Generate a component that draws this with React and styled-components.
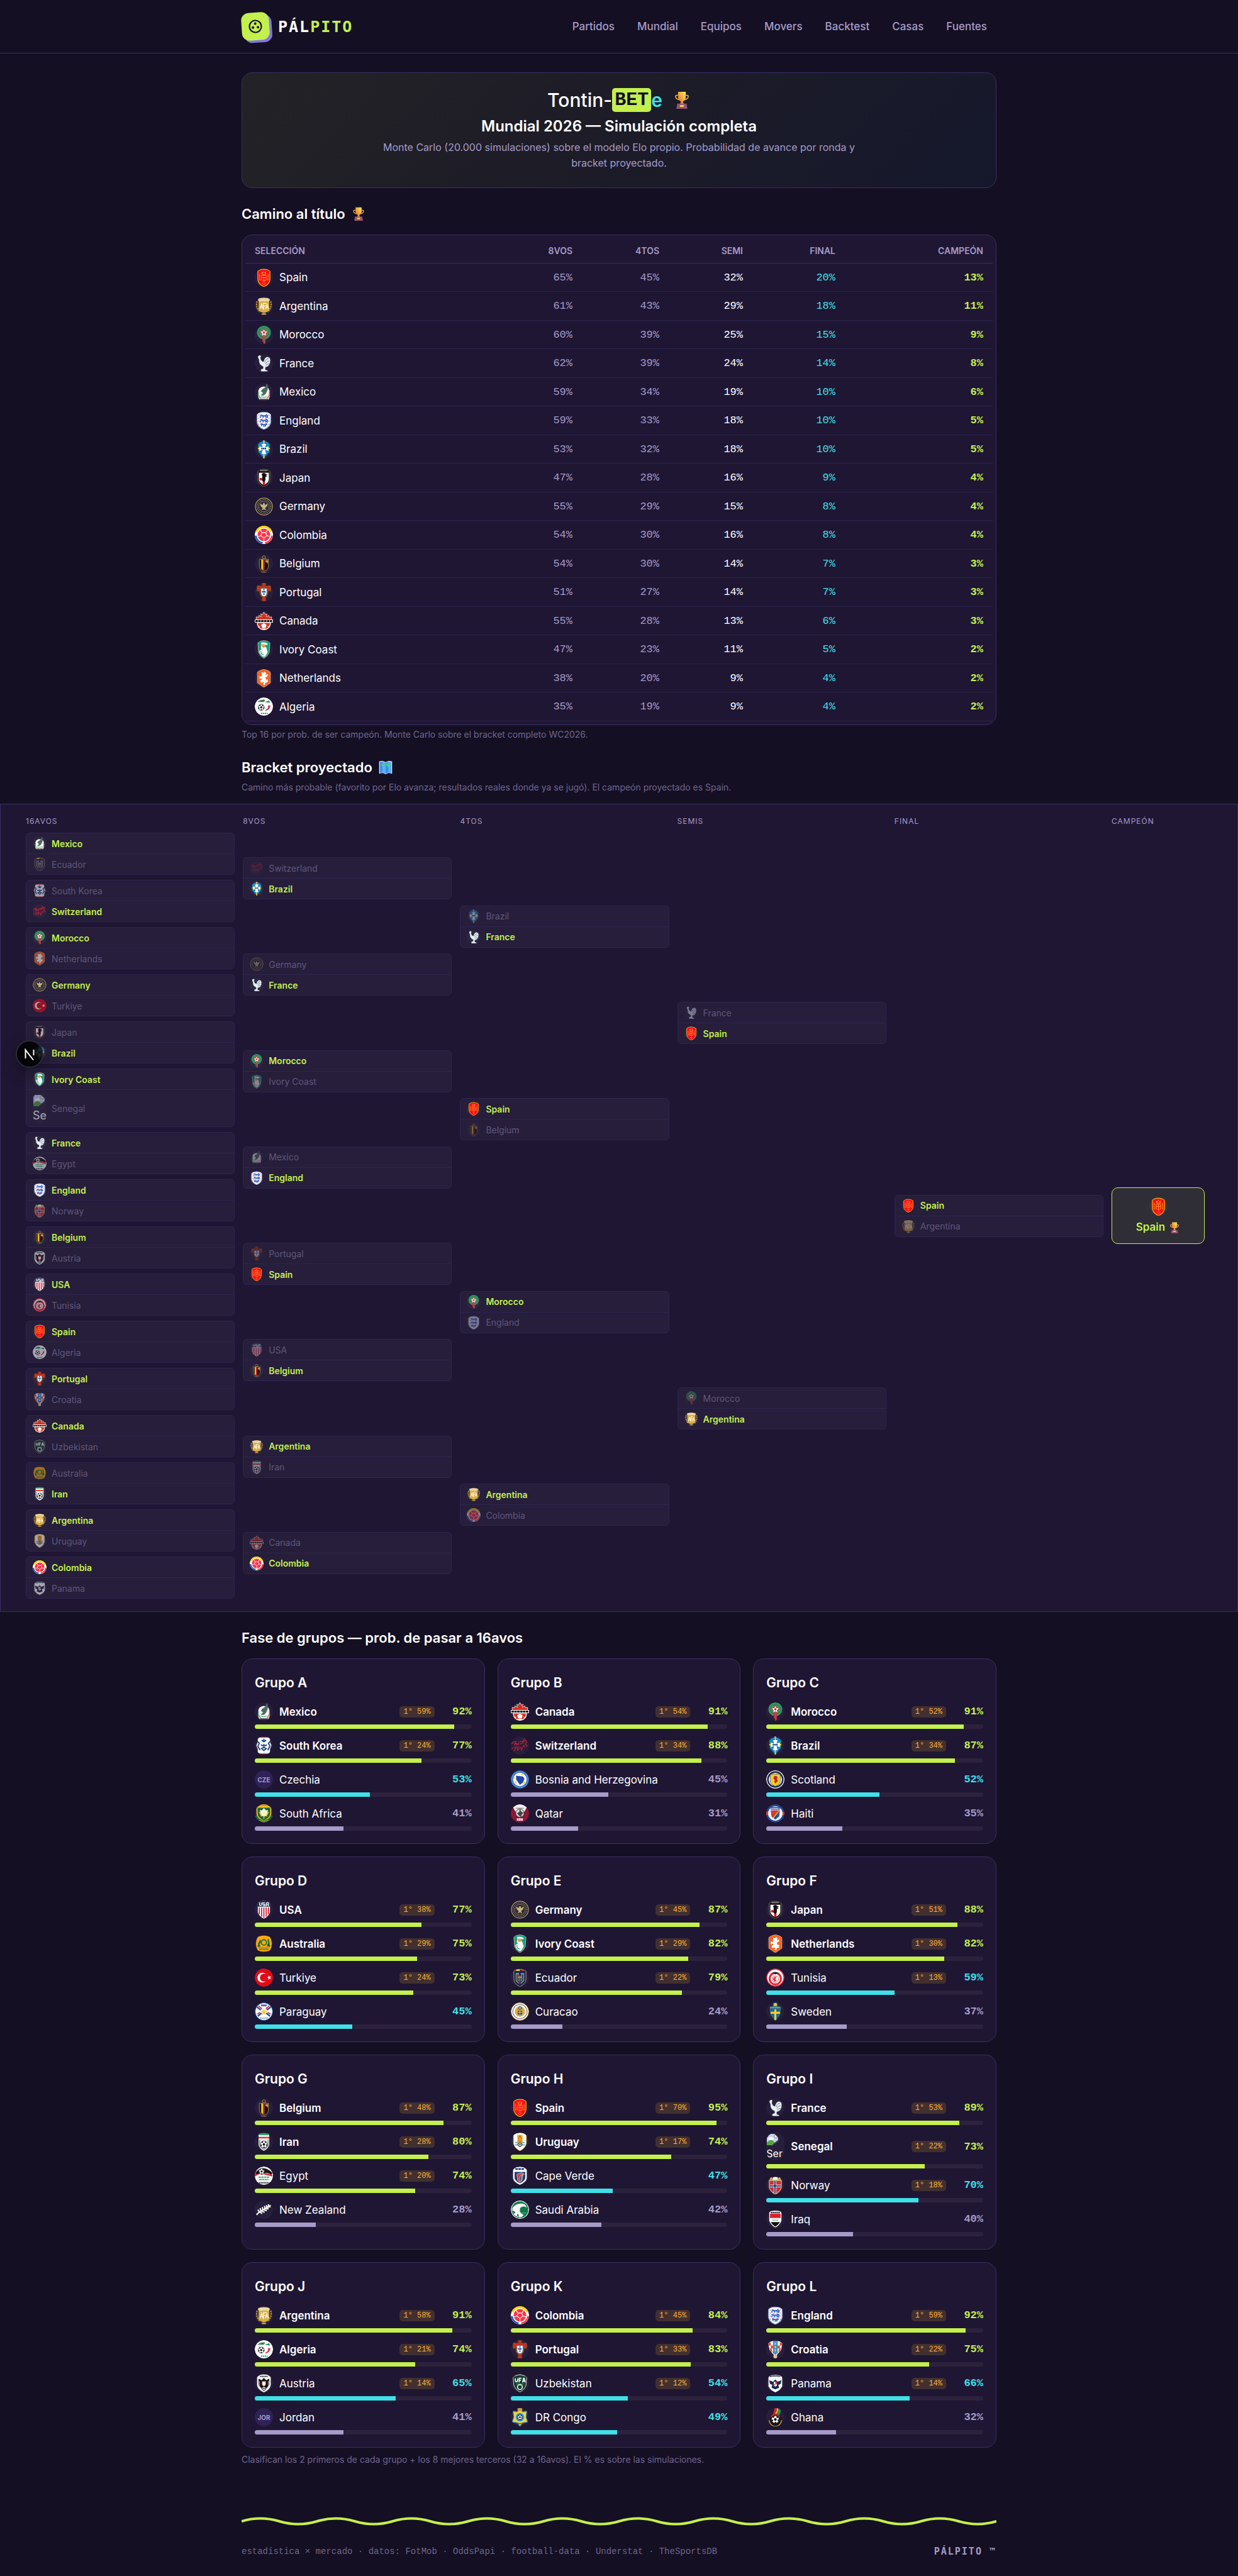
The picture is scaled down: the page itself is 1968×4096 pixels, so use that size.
import React from "react";
import styled, { createGlobalStyle, css } from "styled-components";

const colors = {
  bg: "#140f22",
  panel: "#1f1633",
  line: "#3a2e66",
  lineSoft: "#2e2450",
  text: "#ffffff",
  muted: "#a69bc8",
  faint: "#6f6690",
  lime: "#c4f04d",
  cyan: "#40e0e8",
  amber: "#ffb03a",
};

const sans = `Inter, "Liberation Sans", sans-serif`;
const mono = `"Liberation Mono", monospace`;
const pixel = `"DejaVu Sans Mono", monospace`;

const GlobalStyle = createGlobalStyle`
  * { box-sizing: border-box; }
  body {
    margin: 0;
    background: ${colors.bg};
    color: ${colors.text};
    font-family: ${sans};
    font-size: 17px;
  }
  h1, h2, h3, p { margin: 0; }
`;

/* ---------- crests ---------- */

const SHIELD = "M4 3Q12 -1 20 3V14Q20 20 12 24Q4 20 4 14Z";
const Ball = ({ x = 12, y = 12, r = 4 }) => (
  <g>
    <circle cx={x} cy={y} r={r} fill="#fff" stroke="#111" strokeWidth=".6" />
    <circle cx={x} cy={y} r={r * 0.35} fill="#111" />
    <circle cx={x} cy={y} r={r * 0.8} fill="none" stroke="#111" strokeWidth={r * 0.35} strokeDasharray={`${r * 0.4} ${r * 0.6}`} />
  </g>
);

const crests = {
  Spain: (
    <g>
      <path d={SHIELD} fill="#ff0a1e" stroke="#f5b400" strokeWidth="1" />
      <path d="M9.500 4.500l1 1.500 1.500-2 1.500 2 1-1.500v3h-5zM6.500 7v8M17.500 7v8M5.800 15h1.600M16.600 15h1.600M9 9h6v6q-3 2.500-6 0zM12 9v7M9 12h6" fill="none" stroke="#ff9d1e" strokeWidth=".8" />
      <circle cx="12" cy="19.500" r="1.400" fill="none" stroke="#ff9d1e" strokeWidth=".6" />
    </g>
  ),
  Argentina: (
    <g>
      <path d="M3 6q-2 8 4 14M21 6q2 8-4 14" fill="none" stroke="#c9a13b" strokeWidth="1.800" strokeDasharray="2 1" />
      <path d="M5 5h14v11q0 4-7 5-7-1-7-5z" fill="#d9ae45" />
      <path d="M4 3q8-4 16 0v2H4z" fill="#d9ae45" />
      <path d="M5 2.800h14M5 4.800h14" stroke="#fff" strokeWidth="1" />
      <path d="M7 16l2-7 2 7M8 13.500h2.500M11.500 17V8.500h4M11.500 12h3M14 16l2-6 2 6M15 14h2" fill="none" stroke="#fff" strokeWidth="1" />
      <path d="M9 22l3-1 3 1v1.500H9z" fill="#c9a13b" />
    </g>
  ),
  Morocco: (
    <g>
      <circle cx="12" cy="9" r="9" fill="#2f9c63" />
      <circle cx="12" cy="9" r="6.500" fill="none" stroke="#1b6b44" strokeDasharray="1 1" />
      <path d="M12 3.500l1.600 3.600 4 .4-3 2.700.9 3.900-3.500-2-3.500 2 .9-3.900-3-2.700 4-.4z" fill="#fff" stroke="#d9273a" strokeWidth=".9" />
      <circle cx="12" cy="9" r="1.500" fill="#d9273a" />
      <path d="M10 14h2v7h-2zM12.500 14h1.700v9h-1.700z" fill="#d9273a" />
      <path d="M11.700 14h1v10h-1z" fill="#2f9c63" />
    </g>
  ),
  France: (
    <g>
      <path
        d="M5 1l2 .5 1.500 1.500-1 1.500q.5 5 4 5.500 1-5.500 5-6.500 4.500.5 4 5.500-.5 6-4 7.500l-2.500 1v3l3 1v1.500H8V20l3-1v-2.500Q5 14 5.500 7.500L4 4z"
        fill="#e8eef2"
        stroke="#1d2f46"
        strokeWidth=".4"
      />
      <path d="M13 11q1.500-5 5-5M14 13q2-4 5-4M14.500 15q2-2.500 4.500-2" fill="none" stroke="#5b6f86" strokeWidth=".8" />
    </g>
  ),
  Mexico: (
    <g>
      <path d="M6 7q6-5 12 0 4 7 0 15H6q-4-8 0-15z" fill="#f2f4f2" />
      <path d="M16 0q3 7-1 13-3 5-7 3l3-3-3-2 2-3q4-1 6-8z" fill="#4f6b62" />
      <path d="M5 11q-1.500 6 3 9" fill="none" stroke="#1f9a55" strokeWidth="1" />
      <path d="M19 11q1.500 6-3 9" fill="none" stroke="#d8324a" strokeWidth="1" />
      <path d="M8 18q4 2 8 0" fill="none" stroke="#1f9a55" strokeWidth=".8" />
      <path d="M6.500 21.500h11" stroke="#333" strokeWidth="1.500" strokeDasharray="1.200 .5" />
    </g>
  ),
  England: (
    <g>
      <path d="M3 3Q12 -1 21 3V14Q21 20 12 24Q3 20 3 14Z" fill="#f4f6fb" stroke="#7f9bd6" strokeWidth=".9" />
      <path
        d="M7 5.500l2-.5 1 1h4l1.500-1.500L17 6l-1 1.500 1 1M8 6.500L7 8.500M11 6.500v2M14.500 6.500v2M7 11.500l2-.5 1 1h4l1.500-1.500L17 12l-1 1.500 1 1M8 12.500l-1 2M11 12.500v2M14.500 12.500v2M7.500 17l1.500-.5 1 1h4l1.500-1L16 18M9 17.500v2M12 18v2.500M14 18v2"
        fill="none"
        stroke="#2f5fc4"
        strokeWidth="1.500"
      />
      <path d="M5.300 4.500v14M18.700 4.500v14M9.500 9.800h6M9.500 15.600h6" stroke="#e04a55" strokeWidth="1" strokeDasharray="1 3" />
    </g>
  ),
  Brazil: (
    <g>
      <path d="M12 0l6 3 2 3-1 10-7 8-7-8L4 6l2-3z" fill="#1f86dd" stroke="#1a3a8c" strokeWidth="1" />
      <path d="M5.500 5v11M18.500 5v11" stroke="#2aa34c" strokeWidth="1.400" />
      <path d="M12 0v24M4 11h16" stroke="#f5d10f" strokeWidth="1.600" />
      <path d="M9 5h6l-1.500 4.500L18 8v6l-4.500-1.500L15 18H9l1.500-5.500L6 14V8l4.500 1.500z" fill="#fff" />
      <path d="M8.500 11h7" stroke="#1a3a8c" strokeWidth="2" strokeDasharray="1.800 .5" />
    </g>
  ),
  Japan: (
    <g>
      <path d={SHIELD} fill="#141414" stroke="#b09a62" strokeWidth=".5" />
      <path d="M5.500 5.500h13V14q0 4.500-6.500 8-6.500-3.500-6.500-8z" fill="#fff" />
      <path d="M10.500 5.500h3V21l-1.500 1-1.500-1z" fill="#e0142b" />
      <path d="M9 7l3-1 5 2-3 1 3 1-3 1v4l-2 3-3-3 1-4z" fill="#111" />
      <circle cx="8" cy="14" r="1.800" fill="#e0142b" />
      <path d="M7.500 2.800h9" stroke="#fff" strokeWidth="1.200" strokeDasharray="1 .7" />
    </g>
  ),
  Germany: (
    <g fill="none" stroke="#b39b61">
      <circle cx="12" cy="12" r="12" fill="#2b2839" stroke="none" />
      <circle cx="12" cy="12" r="11.200" strokeWidth="1" />
      <circle cx="12" cy="12" r="9" strokeWidth=".9" strokeDasharray="1 1.200" />
      <circle cx="12" cy="12" r="7" strokeWidth=".6" />
      <path d="M7 8q.5 5 3.500 5.500L9 17l3-1.500 3 1.500-1.500-3.500Q16.500 13 17 8l-3.500 2-.5-2.500h-2L10.500 10z" fill="#c9b37c" stroke="none" />
    </g>
  ),
  Colombia: (
    <g>
      <circle cx="12" cy="12" r="12" fill="#fff" />
      <path d="M2 8a10.800 10.800 0 0 1 20 0" fill="none" stroke="#fbd500" strokeWidth="2.800" />
      <path d="M1.300 13a10.800 10.800 0 0 0 9 9.500" fill="none" stroke="#0f4fb0" strokeWidth="2" />
      <path d="M22.700 13a10.800 10.800 0 0 1-9 9.500" fill="none" stroke="#ff3348" strokeWidth="2" />
      <circle cx="12" cy="12" r="8.300" fill="#ff3348" />
      <path d="M9.500 9h5l1.500 4-4 3-4-3zM9.500 9L7 5.500M14.500 9L17 5.500M16 13l4 1M8 13l-4 1M12 16v4" fill="none" stroke="#fff" strokeWidth=".9" />
    </g>
  ),
  Belgium: (
    <g>
      <path d="M10 3q2-3 4 0v2h-4z" fill="none" stroke="#9a7f45" strokeWidth=".9" />
      <path d="M6 6h12v9q0 5-6 7-6-2-6-7z" fill="#141414" stroke="#a98a48" strokeWidth=".8" />
      <path d="M8.500 6.500h2.300v14l-2.300-2z" fill="#f6cf1e" />
      <path d="M10.800 6.500h2v14.500l-2-.5z" fill="#e3202e" />
      <path d="M14 7h3.500v5q-1-2-3.500-2z" fill="#b6985a" />
      <path d="M8 22.500q4 2 8 0" fill="none" stroke="#7a6a45" />
    </g>
  ),
  Portugal: (
    <g>
      <path d="M9.500 0h5l-.8 4h3.300l4-1v8l-3.500-.8Q18 16 14 19l.8 5H9.200l.8-5Q6 16 6.500 10.200L3 11V3l4 1h3.300z" fill="#c9301f" stroke="#6b5a2a" strokeWidth=".6" />
      <path d="M8 7h8v6q0 4-4 5-4-1-4-5z" fill="#f2f4fa" stroke="#1c6b3a" strokeWidth=".6" />
      <path d="M12 8v8M9.500 11.500h5" stroke="#1d4fae" strokeWidth="1.800" strokeDasharray="1.800 1" />
    </g>
  ),
  Canada: (
    <g>
      <circle cx="12" cy="15" r="9" fill="#fff" />
      <path d="M12 0l2 3.500 2-1-.5 4 3-2 .5 2.500 3.500-.5-1 4H2.500l-1-4L5 7l.5-2.500 3 2-.5-4 2 1z" fill="#d4321f" stroke="#fff" strokeWidth=".6" />
      <path d="M4 14.500h16q0 5-4 7.500H8q-4-2.500-4-7.500z" fill="#d4321f" />
      <path d="M9 17l3-1.500 3 1.500-1 3.500h-4zM5 20l2-1M19 20l-2-1M12 22v2" fill="#fff" stroke="#fff" />
      <path d="M0 10h24v4H0z" fill="#fff" />
      <path d="M.8 12h22.500" stroke="#111" strokeWidth="2.400" strokeDasharray="3.200 .6" />
    </g>
  ),
  "Ivory Coast": (
    <g>
      <path d="M4 2q8-3 16 0l-1 14q-2 5-7 8-5-3-7-8z" fill="#15a084" stroke="#e9b98f" strokeWidth=".7" />
      <path d="M8 3q9-1 9 3-4 0-5 1 4 2 4 6l1 2q-2 6-5 7-6-3-6-8l3-2q-2-4 0-6z" fill="#fff" />
      <circle cx="11.500" cy="7.500" r="2.300" fill="#f59436" />
      <path d="M8 14q0 5 4 5" fill="none" stroke="#15a084" />
    </g>
  ),
  Netherlands: (
    <g>
      <path d="M12 0l8.500 3v15L12 24l-8.500-6V3z" fill="#f4631f" stroke="#ffc9a6" strokeWidth=".6" />
      <path d="M9 4l3 1 1-2 2 2-1 3 3-2v3l-3 2 1 3 2-1v4l-3 1-1 3-2-1 1-3-4 1-1-3 3-2-2-1-2 1V9l3 1z" fill="#fff" />
    </g>
  ),
  Algeria: (
    <g>
      <circle cx="12" cy="12" r="12" fill="#fff" />
      <path d="M3 6l5-3h6l-2 3zM13 6l7 1-1-3z" fill="#1a9a55" />
      <path d="M9 5l3-2" stroke="#d8263b" />
      <Ball x={8.5} y={13} r={4} />
      <path d="M20 11q-1 5-6 6 5-2 4-6z" fill="#d8263b" stroke="#d8263b" />
      <path d="M8 21h9" stroke="#1a9a55" strokeWidth="1.600" strokeDasharray="2 .6" />
    </g>
  ),
  "South Korea": (
    <g>
      <path d="M4 1h16v6l2 5-2 5v6H4v-6l-2-5 2-5z" fill="#f3f6fb" />
      <path d="M4 1.200h16M4 22.800h16" stroke="#e2334c" strokeWidth="1" />
      <path d="M3 6l3 3-2 4 3 5M21 6l-3 3 2 4-3 5M12 3v3M9 5l3 2 3-2M8 11l3 1.500M16 11l-3 1.500M12 10v5M9 16l3-1.500 3 1.500-3 2.500z" fill="none" stroke="#1f3d7a" strokeWidth="1.500" />
    </g>
  ),
  Switzerland: (
    <g fill="none" stroke="#c01f36" strokeWidth="1.100">
      <path d="M1 10l3-3h3L5 12M7 11h3l1-4M4 9.500h5M12 7h3l3-4M12 10l3-1 4-4 2 2-2 3 3 3M4 15l3-1-1 3-2 2M9 19v-5h3M9 16.500h3M13 14l1 4 3-6 2 2M1 17l2-2" />
    </g>
  ),
  "South Africa": (
    <g>
      <path d="M3 2q9-4 18 0v10q0 6-9 10-9-4-9-10z" fill="#12693a" stroke="#f4b81d" strokeWidth="1.600" />
      <path d="M4 2.500q8-3 16 0v2H4z" fill="#f4b81d" />
      <path d="M7 7l2 1 3-3 3 3 2-1v5q-1 4-5 4t-5-4z" fill="#fbf3cf" />
      <path d="M6 10l3 6M18 10l-3 6M12 15v4" stroke="#f4b81d" strokeWidth="1.500" />
      <path d="M1 15l4 5 7 3 7-3 4-5" fill="none" stroke="#12693a" strokeWidth="2.500" />
      <path d="M6 21l6 2 6-2" fill="none" stroke="#f4b81d" strokeWidth=".8" />
    </g>
  ),
  "Bosnia and Herzegovina": (
    <g>
      <circle cx="12" cy="12" r="12" fill="#2f6fc4" />
      <circle cx="12" cy="12" r="10.500" fill="none" stroke="#9cc2ee" strokeDasharray="1 1" />
      <circle cx="12" cy="12" r="8.800" fill="#fff" />
      <path d="M7 7l9 1 2 3-2 5-4 3-5-7z" fill="#1f47ad" />
      <path d="M5.500 14l2 3.500M14 4.500l3 1.500M4.800 9v2M16.500 18l2-3" stroke="#f6c21a" strokeWidth="1.500" />
    </g>
  ),
  Qatar: (
    <g>
      <circle cx="12" cy="12" r="12" fill="#8d1536" />
      <path d="M3 4q9-8 18 0l-5 9H8z" fill="#f1f1f1" />
      <circle cx="12" cy="11.500" r="5.500" fill="#ddd" stroke="#333" strokeWidth=".8" />
      <path d="M8 12l3-2 1-4 2 4 3 1-3 3v3l-3-2z" fill="#444" />
      <path d="M6.500 5h11" stroke="#555" strokeDasharray="1 .6" />
      <path d="M8 20h8" stroke="#fff" strokeWidth="3" strokeDasharray="2.200 .6" />
    </g>
  ),
  Scotland: (
    <g>
      <circle cx="12" cy="12" r="12" fill="#fff" />
      <circle cx="12" cy="12" r="9.800" fill="none" stroke="#1e2b55" strokeWidth="2.200" />
      <path d="M5.500 5h13v9q0 4-6.500 7-6.500-3-6.500-7z" fill="#f6d31d" stroke="#1e2b55" strokeWidth=".6" />
      <path d="M10 8l3-1 2 2-1 2.500 1.500 2.500-2 1.500-1 2-2-2.500 1-2.500-2-1z" fill="#c81e2f" />
      <path d="M7 2h10" stroke="#333" strokeWidth=".8" strokeDasharray="1 .6" />
    </g>
  ),
  Haiti: (
    <g>
      <circle cx="12" cy="12" r="12" fill="#20489c" />
      <path d="M0 10h3v4H0zM21 10h3v4h-3z" fill="#e0403a" />
      <circle cx="12" cy="12" r="9.500" fill="#f3f3ee" />
      <path d="M6 3.500h12V7H6z" fill="#20489c" />
      <path d="M7 5.500h10" stroke="#fff" strokeWidth="1.400" strokeDasharray="1.300 .6" />
      <path d="M6 8h12l-1 8-5 4-5-4z" fill="#2a4ea6" />
      <path d="M6.500 8H18L8 17z" fill="#d9392c" />
      <path d="M17 8.500L9 18" stroke="#f6cf1e" />
    </g>
  ),
  USA: (
    <g>
      <path d="M4 2q8-3 16 0v13q-1 5-8 9-7-4-8-9z" fill="#fff" />
      <path d="M4 2q8-3 16 0v6H4z" fill="#1b2a4d" />
      <path d="M6.300 2.500v3q0 1 1.200 1t1.200-1v-3M13.500 3h-3v2h3v2h-3M15.300 7.500V3h2.700v4.500M15.300 5.500H18" fill="none" stroke="#fff" strokeWidth="1.100" />
      <path d="M6 9v9M9 9v12M12 9v14M15 9v12M18 9v9" stroke="#c9243c" strokeWidth="1.500" />
    </g>
  ),
  Australia: (
    <g>
      <path d="M4 3q8-3 16 0 5 9 0 18-8 3-16 0-5-9 0-18z" fill="#f8a90f" />
      <circle cx="12" cy="10.500" r="3.500" fill="none" stroke="#0b6a4a" strokeWidth="1.400" />
      <path d="M4 16l1-5 2-4 1 2-2 4 1 3zM20 16l-1-5-1-5-1 1 1 4-2 4zM5 17.500h14" fill="#0b6a4a" stroke="#0b6a4a" strokeWidth=".5" />
      <path d="M6 19.500h12" stroke="#0b6a4a" strokeWidth="1.300" strokeDasharray="1 .4" />
    </g>
  ),
  Turkiye: (
    <g>
      <circle cx="12" cy="12" r="12" fill="#e30a17" />
      <circle cx="10" cy="12" r="6.500" fill="#fff" />
      <circle cx="12" cy="12" r="5.200" fill="#e30a17" />
      <path d="M16 12l2-.7V9l1.400 1.800 2.100-.6-1.300 1.800 1.300 1.800-2.100-.6L18 15v-2.300z" fill="#fff" />
    </g>
  ),
  Paraguay: (
    <g>
      <circle cx="12" cy="12" r="11.500" fill="#fff" stroke="#1c5fae" />
      <path d="M3 6l5 4M21 6l-5 4M4 18l5-4M20 18l-5-4" stroke="#1d4fae" strokeWidth="2" />
      <path d="M5 4.500l4.500 4M19 4.500l-4.500 4M3 15.500l4-2.500M21 15.500L17 13" stroke="#e0303f" strokeWidth="1.500" />
      <path d="M12 8l1.200 3 3.300.2-2.600 2.100.9 3.200-2.800-1.800-2.800 1.800.9-3.200-2.600-2.100 3.300-.2z" fill="#f8cf1f" />
      <path d="M8.500 4h7" stroke="#1d4fae" strokeWidth="2.500" strokeDasharray="2 .5" />
      <path d="M7 20.500h10" stroke="#1d4fae" strokeDasharray="1 .5" />
    </g>
  ),
  Ecuador: (
    <g>
      <path d={SHIELD} fill="#14275c" stroke="#b9975a" strokeWidth=".8" />
      <path d="M7 1.500h5v1.800H7z" fill="#f4c41c" />
      <path d="M14 1.500h3v1.800h-3z" fill="#d8263b" />
      <path d="M7 6v10l4 4M17 6v10l-4 4M9.500 6v11M14.500 6v11M7 7h4M13 7h4M9.500 11.500h5M12 9v9" fill="none" stroke="#c8a768" strokeWidth="1" />
    </g>
  ),
  Curacao: (
    <g>
      <circle cx="12" cy="12" r="11.500" fill="#fff" stroke="#e8b838" strokeWidth=".8" />
      <circle cx="12" cy="12" r="9.300" fill="none" stroke="#4a4a6a" strokeWidth="1.400" strokeDasharray="1 .7" />
      <circle cx="12" cy="12" r="6.800" fill="#e4ad2c" />
      <Ball x={12} y={7.5} r={2.2} />
      <path d="M9 11h6v4l-3 2.500L9 15z" fill="#274a9c" />
      <path d="M12 10.500v7M9 13h6" stroke="#f4d35e" strokeWidth=".8" />
    </g>
  ),
  Tunisia: (
    <g>
      <circle cx="12" cy="12" r="11.300" fill="#fff" stroke="#e02435" strokeWidth="1.400" />
      <circle cx="12" cy="13.500" r="7.500" fill="none" stroke="#e02435" strokeWidth="2.500" />
      <circle cx="12" cy="14" r="4.200" fill="#fff" stroke="#e02435" strokeWidth=".7" />
      <path d="M14 12a2.800 2.800 0 1 0 0 4 2 2 0 1 1 0-4z" fill="#e02435" />
      <path d="M6 7q6-5 12 0-5-1.500-6 1-1-2.500-6-1z" fill="#222" />
    </g>
  ),
  Sweden: (
    <g>
      <circle cx="12" cy="3" r="2.700" fill="#e8c437" stroke="#1f6a9c" />
      <path d="M5 6q7-2 14 0l-1 10-6 8-6-8z" fill="#1a64a8" stroke="#3b8f6b" strokeWidth=".6" />
      <path d="M12 9v14M5.800 13.500h12.400" stroke="#f8cf1f" strokeWidth="2.600" />
      <path d="M5.500 6.800h13" stroke="#c8b93b" strokeWidth="1.600" strokeDasharray="1 .6" />
    </g>
  ),
  Iran: (
    <g>
      <path d="M5 1h14v15q-1 5-7 8-6-3-7-8z" fill="#f6f6f6" />
      <path d="M5 1q7-1.500 14 0v2H5z" fill="#169a56" />
      <path d="M5 5.500h14v2.200H5z" fill="#e23a3a" />
      <path d="M6.500 9v8q1 3 5.500 5 4.500-2 5.500-5V9" fill="none" stroke="#333" strokeWidth=".7" />
      <Ball x={12} y={15.5} r={4.6} />
    </g>
  ),
  Egypt: (
    <g>
      <circle cx="12" cy="12" r="12" fill="#f6f6f6" />
      <path d="M1 8q9-12 22 0l-1 3Q14 5 1 12z" fill="#171717" />
      <path d="M12 8l11 3v2l-12-3zM0 10l7-1-7 4z" fill="#df2034" />
      <Ball x={9} y={6.5} r={3.8} />
      <path d="M5 14h14M6 17h12" stroke="#2fa666" strokeWidth="1.500" strokeDasharray="3 .6" />
      <path d="M5.500 21.300h13" stroke="#222" strokeWidth="1.600" strokeDasharray="1 .4" />
    </g>
  ),
  "New Zealand": (
    <g>
      <path d="M1 19Q9 8 22 4q1 7-9 12-4 2-8 1l-3 3z" fill="#0d0d12" />
      <path d="M2 19l3-3 16-10M6 15l-2-3M8 13.500L7 10M10.500 12L10 8.500M13 10.500l0-3.500M15.500 9V6M18 7.500V5M7 15.500l3 1.500M9.500 14l3.500 1.500M12 12.500l4 1M14.500 11l4 0M17 9l4-1" fill="none" stroke="#fff" strokeWidth="1.700" />
    </g>
  ),
  Uruguay: (
    <g>
      <path d="M3.500 2q8.500-3 17 0v12q-1 6-8.500 10-7.500-4-8.500-10z" fill="#fff" stroke="#e5b432" strokeWidth=".7" />
      <path d="M8.500 3h7v14h-7z" fill="#f2b21b" />
      <path d="M10 8l2-4 2 4M10 10h4M10 12h4" fill="none" stroke="#d9542b" strokeWidth="1" />
      <path d="M5.500 13h4M14.500 13h4M5.500 16h4M14.500 16h4" stroke="#57a8dc" strokeWidth="1.400" />
      <Ball x={12} y={16} r={2.6} />
    </g>
  ),
  "Cape Verde": (
    <g>
      <path d="M3 1.500q9-2 18 0v14q-1 5-9 8.500-8-3.500-9-8.500z" fill="#fff" />
      <path d="M6 3.200h12" stroke="#1b3c70" strokeWidth="2.400" strokeDasharray="3.300 .7" />
      <path d="M5 7h14v8q-1 4-7 7-6-3-7-7z" fill="#1b3c70" />
      <path d="M8 10l6-2 4 2-5 1-2 5 1 5-3-3zM14 12l2-1-1 6-2 3z" fill="#d23b47" stroke="#fff" strokeWidth=".5" />
    </g>
  ),
  "Saudi Arabia": (
    <g>
      <circle cx="12" cy="12" r="12" fill="#fff" />
      <circle cx="12" cy="12" r="11" fill="#0e7a4a" />
      <path d="M2 10q5-7 13-6 5 1 6 5-7-3-9 2-1 6 5 8-2 3-6 3-8-1-9-9z" fill="#f5f7f5" />
      <path d="M2 13l4 2-2 3zM9 17l2 4-3-1z" fill="#2a5a48" />
      <path d="M13 16.500h7" stroke="#7fd3ab" strokeDasharray="1 .6" />
    </g>
  ),
  Norway: (
    <g>
      <path d="M4 6h16v9q-1 5-8 9-7-4-8-9z" fill="#d32b3b" stroke="#c9a66b" strokeWidth="1.200" />
      <path d="M4 6l2-5 3 2 3-2 3 2 3-2 2 5z" fill="#c9a66b" />
      <path d="M9 1.500h6V5H9z" fill="#fff" />
      <path d="M11.500 6.500v16M5 13h14" stroke="#fff" strokeWidth="3.200" />
      <path d="M11.500 6.500v16M5 13h14" stroke="#1c3470" strokeWidth="1.700" />
    </g>
  ),
  Iraq: (
    <g>
      <path d="M4 2q8-2 16 0v12q-2 6-8 9-6-3-8-9z" fill="#fff" />
      <path d="M5 5h14v5.500H5z" fill="#d92231" />
      <path d="M6 16h12q-2 4-6 6-4-2-6-6z" fill="#111" />
      <path d="M6 3.500h12" stroke="#111" strokeWidth="1.700" strokeDasharray="2 .5" />
      <path d="M8 13.300h8" stroke="#2a8f55" strokeDasharray="1.500 .6" />
    </g>
  ),
  Austria: (
    <g>
      <path d="M3 1.500q9-2 18 0v13q-1 6-9 9.500-8-3.500-9-9.500z" fill="#f4f4f4" />
      <path d="M5 6l4 2 3-3 3 3 4-2v8l-3 4-4 4-4-4-3-4z" fill="#151515" />
      <path d="M9.500 9.500h5v4q-1 2-2.500 2.500-1.500-.5-2.500-2.500z" fill="#fff" stroke="#e02435" strokeWidth=".8" />
      <path d="M7 3h10" stroke="#222" strokeWidth="1.500" strokeDasharray="1.500 .6" />
      <Ball x={12} y={19} r={2.6} />
      <path d="M6 9v6M18 9v6" stroke="#f4f4f4" strokeWidth=".7" />
    </g>
  ),
  Uzbekistan: (
    <g>
      <path d="M3 3l9-2.500L21 3l-1 12q-2 5-8 8.500-6-3.500-8-8.500z" fill="#123f2f" stroke="#c9c0b2" strokeWidth=".9" />
      <path d="M6 5.500v3q0 1.500 1.500 1.500T9 8.500v-3M11 11V5.500h3M11 8h2.500M15.500 11l1.300-5.500h.7L19 11M16 9.300h2.500" fill="none" stroke="#fff" strokeWidth="1.300" />
      <circle cx="12" cy="17" r="3.200" fill="none" stroke="#fff" strokeWidth="1.200" />
      <path d="M7 13h10" stroke="#7fae95" strokeWidth=".7" />
    </g>
  ),
  "DR Congo": (
    <g>
      <path d="M3 4l5 1 4-3 4 3 5-1-1 8 2 6-7 2-3 4-3-4-7-2 2-6z" fill="#f1d53a" stroke="#3a8fd0" strokeWidth="1" />
      <path d="M9 0h6v4H9z" fill="#c9a13b" />
      <circle cx="12" cy="12" r="5.500" fill="#2a90d8" />
      <Ball x={12} y={12} r={3.2} />
      <path d="M6 19q6 3 12 0" fill="none" stroke="#33506a" strokeWidth="1.600" strokeDasharray="1.500 .5" />
    </g>
  ),
  Croatia: (
    <g>
      <path d="M2.500 3q9.500-4 19 0l-2 10-7.500 9-7.500-9z" fill="#fff" />
      <path d="M3 3h3v4H3zM18 3h3v4h-3zM6 7h3v4H6zM15 7h3v4h-3zM4.500 11H7l1 4H6zM17 11h2.500L18 15h-2zM8 15h2v4zM14 15h2l-2 4z" fill="#e4452f" />
      <path d="M9 1h6v14l-3 5-3-5z" fill="#2f8fce" />
      <path d="M12 3.500v13" stroke="#f4c26b" strokeWidth="2" strokeDasharray="2.500 1.800" />
      <circle cx="12" cy="21.500" r="2.500" fill="#e6c78d" />
    </g>
  ),
  Panama: (
    <g>
      <path d="M3 2.500q9-3 18 0V16q-2 5-9 8-7-3-9-8z" fill="#fff" />
      <path d="M5 3.200q7-1.500 14 0" fill="none" stroke="#1b2a4d" strokeWidth="1.600" strokeDasharray="1.500 .5" />
      <path d="M4 8l5 2 3-3 3 3 5-2-1 5-3 1 1 4-5 2-5-2 1-4-3-1z" fill="#1b2a4d" />
      <path d="M10 10h4v5l-2 1.500-2-1.500z" fill="#fff" />
      <path d="M12 10h2v3h-2zM10 13h2v3z" fill="#d32b3b" />
    </g>
  ),
  Ghana: (
    <g>
      <path d="M6 11q5-4 5-11h3q1 5-4 11z" fill="#e02435" />
      <path d="M10 9q5-4 4-9h2q0 6-4 10z" fill="#f6cf1e" />
      <path d="M12 10q5-4 4-10h3q1 8-4 11z" fill="#1d9a50" />
      <circle cx="12" cy="15.500" r="8" fill="#141414" />
      <path d="M4 16a8 8 0 0 0 16 0" fill="none" stroke="#d8a32c" strokeWidth="1.200" />
      <path d="M6 12a7 7 0 0 1 12 0" fill="none" stroke="#e02435" strokeWidth="1.300" />
      <Ball x={12} y={15} r={5} />
    </g>
  ),
};

const shortCodes = { Czechia: "CZE", Jordan: "JOR" };

const CrestFrame = styled.span`
  flex: none;
  width: ${(p) => p.$size}px;
  height: ${(p) => p.$size}px;
  border-radius: 50%;
  overflow: hidden;
  background: rgba(255, 255, 255, 0.04);
  svg {
    display: block;
    width: 100%;
    height: 100%;
  }
`;
const CodeFrame = styled(CrestFrame)`
  display: flex;
  align-items: center;
  justify-content: center;
  background: #2e2257;
  color: ${colors.muted};
  font-size: 10px;
  font-weight: 700;
`;
const MissingFrame = styled.span`
  flex: none;
  width: ${(p) => p.$size}px;
  border-radius: 15px;
  overflow: hidden;
  background: rgba(255, 255, 255, 0.04);
  color: ${colors.text};
  font-weight: 400;
  font-size: ${(p) => (p.$small ? 18 : 16)}px;
  line-height: ${(p) => (p.$small ? 24 : 22)}px;
  svg {
    display: block;
    width: 20px;
    height: ${(p) => (p.$small ? 24 : 22)}px;
  }
`;

const Crest = ({ team, size = 29, small = false }) => {
  if (team === "Senegal") {
    return (
      <MissingFrame $size={size} $small={small}>
        <svg viewBox="0 0 20 20" aria-hidden="true">
          <path d="M1 1h12l6 6v6l-9 6H1z" fill="#c5d3f2" />
          <path d="M3 10q1-4 5-4 4 0 4 4z" fill="#fff" />
          <path d="M1 19v-4q5-6 10-3l3 3-6 4z" fill="#55a63a" />
          <path d="M13 1v6h6z" fill="#f1f1f1" stroke="#8b8b8b" />
          <path d="M20 11L9 20" stroke="#3a3547" strokeWidth="2" />
        </svg>
        {small ? "Se" : "Ser"}
      </MissingFrame>
    );
  }
  if (shortCodes[team]) return <CodeFrame $size={size}>{shortCodes[team]}</CodeFrame>;
  return (
    <CrestFrame $size={size}>
      <svg viewBox="0 0 24 24" role="img" aria-label={team}>
        {crests[team]}
      </svg>
    </CrestFrame>
  );
};

/* ---------- emoji ---------- */

const EmojiSvg = styled.svg`
  width: ${(p) => p.$w}px;
  height: ${(p) => p.$w}px;
  flex: none;
`;
const Trophy = ({ size }) => (
  <EmojiSvg $w={size} viewBox="2 0 28 32" role="img" aria-label="trofeo">
    <defs>
      <linearGradient id="cup" x1="0" y1="1" x2="1" y2="0">
        <stop offset="0" stopColor="#d9663c" />
        <stop offset=".5" stopColor="#f3a43a" />
        <stop offset="1" stopColor="#fff06a" />
      </linearGradient>
    </defs>
    <path d="M9 7.500H6.500a2 2 0 0 0-2 2q0 4.500 6 6M23 7.500h2.500a2 2 0 0 1 2 2q0 4.500-6 6" fill="none" stroke="#f4b93c" strokeWidth="1.800" />
    <path d="M9 1h14v9q0 7-5 8.500v1.500q0 2 3 3.500v1H11v-1q3-1.500 3-3.500v-1.500Q9 17 9 10z" fill="url(#cup)" />
    <path d="M7.500 22.500h17L26 32H6z" fill="#93566f" />
    <rect x="12.500" y="25" width="7" height="3.500" rx=".8" fill="#ffc95c" />
  </EmojiSvg>
);
const MapIcon = ({ size }) => (
  <EmojiSvg $w={size} viewBox="0 0 32 32" role="img" aria-label="mapa">
    <path d="M1 2l8-1 7 3 7-3 8 1v29l-8-2-7 3-7-3-8 2z" fill="#e3cfe6" />
    <path d="M3 4l6-1.500V28l-6 1.500zM16 5.500L23 3v25l-7 2.500z" fill="#3f8cf0" />
    <path d="M9 2.500l7 3v25L9 28zM23 3l6 1v25.500L23 28z" fill="#4fb4f7" />
    <path d="M5 9l6-2 3 2-3 3-1 3-3-3zM10 16l3 2-2 5-2-3zM17 8l4-2 6 2-1 4-3 1-1 3-3-3-2-1zM24 19h3v4h-3z" fill="#49cf8b" />
  </EmojiSvg>
);

/* ---------- header ---------- */

const Page = styled.div`
  position: relative;
`;
const Container = styled.div`
  max-width: 1240px;
  margin: 0 auto;
  padding: 0 20px;
`;
const Header = styled.header`
  border-bottom: 1px solid ${colors.line};
`;
const HeaderRow = styled(Container)`
  display: flex;
  align-items: center;
  justify-content: space-between;
  height: 84px;
`;
const Brand = styled.a`
  display: flex;
  align-items: center;
  gap: 14px;
  color: ${colors.text};
  text-decoration: none;
  font-family: ${pixel};
  font-size: 25px;
  font-weight: 700;
  letter-spacing: 2px;
  span span {
    color: ${colors.lime};
  }
`;
const LogoTile = styled.svg`
  width: 44px;
  height: 44px;
  padding: 11px;
  border-radius: 12px;
  background: ${colors.lime};
  box-shadow: 4px 4px 0 #8078e0;
  transform: rotate(-4deg);
`;
const Nav = styled.nav`
  display: flex;
  gap: 6px;
  a {
    padding: 8px 15px;
    color: ${colors.muted};
    font-weight: 500;
    text-decoration: none;
  }
`;

/* ---------- hero ---------- */

const Hero = styled.section`
  margin-top: 30px;
  padding: 24px 20px 26px;
  border: 1px solid ${colors.line};
  border-radius: 17px;
  background: linear-gradient(135deg, #232326 0%, #1d1c27 45%, #15182c 100%);
  text-align: center;
`;
const HeroMark = styled.div`
  display: flex;
  align-items: center;
  justify-content: center;
  height: 38px;
  font-size: 30px;
  font-weight: 500;
  line-height: 38px;
  svg {
    margin-left: 17px;
  }
`;
const Bet = styled.span`
  padding: 0 4px;
  border-radius: 5px;
  background: ${colors.lime};
  color: ${colors.bg};
  font-family: ${mono};
  font-weight: 700;
`;
const Tail = styled.span`
  color: ${colors.cyan};
  font-weight: 600;
`;
const HeroTitle = styled.h1`
  margin-top: 8px;
  font-size: 24px;
  font-weight: 600;
  line-height: 30px;
`;
const HeroText = styled.p`
  max-width: 788px;
  margin: 6px auto 0;
  color: ${colors.muted};
  font-size: 16px;
  line-height: 25px;
`;

const SectionTitle = styled.h2`
  display: flex;
  align-items: center;
  gap: 10px;
  margin-top: 26px;
  font-size: 22px;
  font-weight: 600;
  line-height: 30px;
`;
const Note = styled.p`
  margin-top: ${(p) => p.$top || 4}px;
  color: ${colors.faint};
  font-size: 14px;
  line-height: 22px;
`;

/* ---------- title odds table ---------- */

const TableCard = styled.div`
  margin-top: 18px;
  padding: 5px;
  border: 1px solid ${colors.line};
  border-radius: 17px;
  background: ${colors.panel};
`;
const Table = styled.table`
  width: 100%;
  table-layout: fixed;
  border-collapse: separate;
  border-spacing: 0;
  th {
    height: 40px;
    padding: 0 15px;
    border-bottom: 1px solid ${colors.line};
    color: ${colors.muted};
    font-size: 14px;
    font-weight: 600;
    text-align: right;
  }
  th:first-child {
    text-align: left;
  }
  td {
    height: 45px;
    padding: 0 15px;
    border-bottom: 1px solid ${colors.lineSoft};
  }
  tr:nth-child(even) td {
    height: 46px;
  }
`;
const TeamCell = styled.div`
  display: flex;
  align-items: center;
  gap: 10px;
`;
const tones = {
  lime: colors.lime,
  cyan: colors.cyan,
  muted: colors.muted,
  plain: colors.text,
};
const NumCell = styled.td`
  color: ${(p) => tones[p.$tone]};
  font-family: ${mono};
  font-weight: ${(p) => (p.$bold ? 700 : 400)};
  text-align: right;
`;

const odds = [
  ["Spain", 65, 45, 32, 20, 13],
  ["Argentina", 61, 43, 29, 18, 11],
  ["Morocco", 60, 39, 25, 15, 9],
  ["France", 62, 39, 24, 14, 8],
  ["Mexico", 59, 34, 19, 10, 6],
  ["England", 59, 33, 18, 10, 5],
  ["Brazil", 53, 32, 18, 10, 5],
  ["Japan", 47, 28, 16, 9, 4],
  ["Germany", 55, 29, 15, 8, 4],
  ["Colombia", 54, 30, 16, 8, 4],
  ["Belgium", 54, 30, 14, 7, 3],
  ["Portugal", 51, 27, 14, 7, 3],
  ["Canada", 55, 28, 13, 6, 3],
  ["Ivory Coast", 47, 23, 11, 5, 2],
  ["Netherlands", 38, 20, 9, 4, 2],
  ["Algeria", 35, 19, 9, 4, 2],
];

const OddsTable = () => (
  <TableCard>
    <Table>
      <colgroup>
        <col />
        <col width="138" />
        <col width="138" />
        <col width="133" />
        <col width="147" />
        <col width="235" />
      </colgroup>
      <thead>
        <tr>
          <th>SELECCIÓN</th>
          <th>8VOS</th>
          <th>4TOS</th>
          <th>SEMI</th>
          <th>FINAL</th>
          <th>CAMPEÓN</th>
        </tr>
      </thead>
      <tbody>
        {odds.map(([team, r8, r4, semi, final, champ]) => (
          <tr key={team}>
            <td>
              <TeamCell>
                <Crest team={team} />
                {team}
              </TeamCell>
            </td>
            <NumCell $tone="muted">{r8}%</NumCell>
            <NumCell $tone="muted">{r4}%</NumCell>
            <NumCell $tone="plain">{semi}%</NumCell>
            <NumCell $tone="cyan">{final}%</NumCell>
            <NumCell $tone="lime" $bold>{champ}%</NumCell>
          </tr>
        ))}
      </tbody>
    </Table>
  </TableCard>
);

/* ---------- bracket ---------- */

const BracketPanel = styled.section`
  display: grid;
  grid-template-columns: repeat(5, 1fr) 148px;
  column-gap: 13px;
  margin-top: 15px;
  padding: 16px 52px 16px 40px;
  border: 1px solid ${colors.line};
  background: ${colors.panel};
`;
const Round = styled.div`
  display: flex;
  flex-direction: column;
`;
const RoundName = styled.h3`
  margin-bottom: 4px;
  color: ${colors.muted};
  font-size: 12px;
  font-weight: 400;
  letter-spacing: 1px;
  line-height: 21px;
`;
const Matches = styled.div`
  flex: 1;
  display: flex;
  flex-direction: column;
  justify-content: space-around;
`;
const Match = styled.div`
  margin: 4px 0;
  border: 1px solid ${colors.lineSoft};
  border-radius: 6px;
  background: rgba(255, 255, 255, 0.035);
`;
const Side = styled.div`
  display: flex;
  align-items: center;
  gap: 8px;
  min-height: 32px;
  padding: 5px 10px;
  color: ${colors.muted};
  font-size: 14px;
  & + & {
    border-top: 1px solid ${colors.lineSoft};
    min-height: 33px;
  }
  ${(p) =>
    p.$won
      ? css`
          color: ${colors.lime};
          font-weight: 600;
        `
      : css`
          > * {
            opacity: 0.45;
          }
          > :first-child {
            opacity: ${p.$early ? 0.6 : 0.45};
          }
        `}
`;
const Champion = styled.div`
  display: flex;
  flex-direction: column;
  align-items: center;
  gap: 8px;
  padding: 15px 10px;
  border: 1px solid ${colors.lime};
  border-radius: 10px;
  background: #2f2d35;
  color: ${colors.lime};
  font-weight: 600;
  line-height: 21px;
`;
const ChampionName = styled.div`
  display: flex;
  align-items: center;
  gap: 6px;
`;

// [home, away, index of the side that goes through]
const rounds = [
  {
    name: "16AVOS",
    matches: [
      ["Mexico", "Ecuador", 0],
      ["South Korea", "Switzerland", 1],
      ["Morocco", "Netherlands", 0],
      ["Germany", "Turkiye", 0],
      ["Japan", "Brazil", 1],
      ["Ivory Coast", "Senegal", 0],
      ["France", "Egypt", 0],
      ["England", "Norway", 0],
      ["Belgium", "Austria", 0],
      ["USA", "Tunisia", 0],
      ["Spain", "Algeria", 0],
      ["Portugal", "Croatia", 0],
      ["Canada", "Uzbekistan", 0],
      ["Australia", "Iran", 1],
      ["Argentina", "Uruguay", 0],
      ["Colombia", "Panama", 0],
    ],
  },
  {
    name: "8VOS",
    matches: [
      ["Switzerland", "Brazil", 1],
      ["Germany", "France", 1],
      ["Morocco", "Ivory Coast", 0],
      ["Mexico", "England", 1],
      ["Portugal", "Spain", 1],
      ["USA", "Belgium", 1],
      ["Argentina", "Iran", 0],
      ["Canada", "Colombia", 1],
    ],
  },
  {
    name: "4TOS",
    matches: [
      ["Brazil", "France", 1],
      ["Spain", "Belgium", 0],
      ["Morocco", "England", 0],
      ["Argentina", "Colombia", 0],
    ],
  },
  {
    name: "SEMIS",
    matches: [
      ["France", "Spain", 1],
      ["Morocco", "Argentina", 1],
    ],
  },
  { name: "FINAL", matches: [["Spain", "Argentina", 0]] },
];

const Bracket = () => (
  <BracketPanel>
    {rounds.map((round, r) => (
      <Round key={round.name}>
        <RoundName>{round.name}</RoundName>
        <Matches>
          {round.matches.map(([home, away, winner]) => (
            <Match key={home + away}>
              {[home, away].map((team, i) => (
                <Side key={team} $won={winner === i} $early={r === 0}>
                  <Crest team={team} size={22} small />
                  <span>{team}</span>
                </Side>
              ))}
            </Match>
          ))}
        </Matches>
      </Round>
    ))}
    <Round>
      <RoundName>CAMPEÓN</RoundName>
      <Matches>
        <Champion>
          <Crest team="Spain" />
          <ChampionName>
            Spain <Trophy size={18} />
          </ChampionName>
        </Champion>
      </Matches>
    </Round>
  </BracketPanel>
);

/* ---------- groups ---------- */

const Groups = styled.div`
  display: grid;
  grid-template-columns: repeat(3, 1fr);
  gap: 20px;
  margin: 18px 0 8px;
`;
const Card = styled.section`
  padding: 20px;
  border: 1px solid ${colors.line};
  border-radius: 17px;
  background: ${colors.panel};
  h3 {
    margin-bottom: 14px;
    font-size: 21px;
    font-weight: 600;
    line-height: 35px;
  }
`;
const TeamList = styled.div`
  display: flex;
  flex-direction: column;
  gap: 12px;
`;
const TeamRow = styled.div`
  display: flex;
  align-items: center;
  gap: 10px;
`;
const TeamName = styled.span`
  flex: 1;
  font-weight: ${(p) => (p.$top ? 600 : 400)};
`;
const FirstBadge = styled.span`
  padding: 0 6px;
  border-radius: 5px;
  background: #41302f;
  color: ${colors.amber};
  font-family: ${mono};
  font-size: 12px;
  line-height: 18px;
`;
const Pct = styled.span`
  width: 49px;
  color: ${(p) => tones[p.$tone]};
  font-family: ${mono};
  font-weight: 700;
  text-align: right;
`;
const Track = styled.div`
  height: 7px;
  margin-top: 6px;
  border-radius: 4px;
  overflow: hidden;
  background: #2c223d;
`;
const Fill = styled.div`
  height: 100%;
  background: ${(p) => tones[p.$tone]};
`;

// [team, prob. of going through, prob. of finishing first, bar tone]
const groups = {
  A: [["Mexico", 92, 59, "lime"], ["South Korea", 77, 24, "lime"], ["Czechia", 53, 0, "cyan"], ["South Africa", 41, 0, "muted"]],
  B: [["Canada", 91, 54, "lime"], ["Switzerland", 88, 34, "lime"], ["Bosnia and Herzegovina", 45, 0, "muted"], ["Qatar", 31, 0, "muted"]],
  C: [["Morocco", 91, 52, "lime"], ["Brazil", 87, 34, "lime"], ["Scotland", 52, 0, "cyan"], ["Haiti", 35, 0, "muted"]],
  D: [["USA", 77, 38, "lime"], ["Australia", 75, 29, "lime"], ["Turkiye", 73, 24, "lime"], ["Paraguay", 45, 0, "cyan"]],
  E: [["Germany", 87, 45, "lime"], ["Ivory Coast", 82, 29, "lime"], ["Ecuador", 79, 22, "lime"], ["Curacao", 24, 0, "muted"]],
  F: [["Japan", 88, 51, "lime"], ["Netherlands", 82, 30, "lime"], ["Tunisia", 59, 13, "cyan"], ["Sweden", 37, 0, "muted"]],
  G: [["Belgium", 87, 48, "lime"], ["Iran", 80, 28, "lime"], ["Egypt", 74, 20, "lime"], ["New Zealand", 28, 0, "muted"]],
  H: [["Spain", 95, 70, "lime"], ["Uruguay", 74, 17, "lime"], ["Cape Verde", 47, 0, "cyan"], ["Saudi Arabia", 42, 0, "muted"]],
  I: [["France", 89, 53, "lime"], ["Senegal", 73, 22, "lime"], ["Norway", 70, 18, "cyan"], ["Iraq", 40, 0, "muted"]],
  J: [["Argentina", 91, 58, "lime"], ["Algeria", 74, 21, "lime"], ["Austria", 65, 14, "cyan"], ["Jordan", 41, 0, "muted"]],
  K: [["Colombia", 84, 45, "lime"], ["Portugal", 83, 33, "lime"], ["Uzbekistan", 54, 12, "cyan"], ["DR Congo", 49, 0, "cyan"]],
  L: [["England", 92, 59, "lime"], ["Croatia", 75, 22, "lime"], ["Panama", 66, 14, "cyan"], ["Ghana", 32, 0, "muted"]],
};

const GroupCard = ({ name, teams }) => (
  <Card>
    <h3>Grupo {name}</h3>
    <TeamList>
      {teams.map(([team, pct, first, tone], i) => (
        <div key={team}>
          <TeamRow>
            <Crest team={team} />
            <TeamName $top={i < 2}>{team}</TeamName>
            {first > 0 && <FirstBadge>1° {first}%</FirstBadge>}
            <Pct $tone={tone}>{pct}%</Pct>
          </TeamRow>
          <Track>
            <Fill $tone={tone} style={{ width: `${pct}%` }} />
          </Track>
        </div>
      ))}
    </TeamList>
  </Card>
);

/* ---------- footer ---------- */

const Wave = styled.svg`
  display: block;
  width: 100%;
  height: 20px;
`;
const Footer = styled.footer`
  margin-top: 77px;
  padding-bottom: 28px;
`;
const FooterRow = styled.div`
  display: flex;
  justify-content: space-between;
  align-items: center;
  margin-top: 27px;
  color: ${colors.faint};
  font-family: ${mono};
  font-size: 14px;
  line-height: 22px;
  strong {
    color: ${colors.muted};
    font-family: ${pixel};
    font-size: 15px;
    letter-spacing: 2px;
  }
`;

const DevBadge = styled.button`
  position: absolute;
  top: 1654px;
  left: 25px;
  width: 44px;
  height: 44px;
  padding: 0;
  border: 2px solid #2b2a2e;
  border-radius: 50%;
  background: rgba(0, 0, 0, 0.85);
  box-shadow: 0 8px 24px rgba(0, 0, 0, 0.25);
  svg {
    display: block;
    width: 40px;
    height: 40px;
  }
`;

const links = ["Partidos", "Mundial", "Equipos", "Movers", "Backtest", "Casas", "Fuentes"];

export default function App() {
  return (
    <Page>
      <GlobalStyle />
      <Header>
        <HeaderRow>
          <Brand href="#">
            <LogoTile viewBox="0 0 22 22" aria-hidden="true">
              <circle cx="11" cy="11" r="9.500" fill="none" stroke={colors.bg} strokeWidth="2.200" />
              <circle cx="11" cy="6.500" r="2" fill={colors.bg} />
              <circle cx="7" cy="12.500" r="2" fill={colors.bg} />
              <circle cx="15" cy="12.500" r="2" fill={colors.bg} />
            </LogoTile>
            <span>
              PÁL<span>PITO</span>
            </span>
          </Brand>
          <Nav>
            {links.map((link) => (
              <a key={link} href="#">
                {link}
              </a>
            ))}
          </Nav>
        </HeaderRow>
      </Header>
      <Container>
        <Hero>
          <HeroMark>
            Tontin-<Bet>BET</Bet>
            <Tail>e</Tail>
            <Trophy size={28} />
          </HeroMark>
          <HeroTitle>Mundial 2026 — Simulación completa</HeroTitle>
          <HeroText>
            Monte Carlo (20.000 simulaciones) sobre el modelo Elo propio. Probabilidad de avance por ronda y bracket
            proyectado.
          </HeroText>
        </Hero>
        <SectionTitle>
          Camino al título <Trophy size={22} />
        </SectionTitle>
        <OddsTable />
        <Note>Top 16 por prob. de ser campeón. Monte Carlo sobre el bracket completo WC2026.</Note>
        <SectionTitle>
          Bracket proyectado <MapIcon size={22} />
        </SectionTitle>
        <Note $top={6}>
          Camino más probable (favorito por Elo avanza; resultados reales donde ya se jugó). El campeón proyectado es
          Spain.
        </Note>
      </Container>
      <Bracket />
      <Container>
        <SectionTitle>Fase de grupos — prob. de pasar a 16avos</SectionTitle>
        <Groups>
          {Object.entries(groups).map(([name, teams]) => (
            <GroupCard key={name} name={name} teams={teams} />
          ))}
        </Groups>
        <Note>
          Clasifican los 2 primeros de cada grupo + los 8 mejores terceros (32 a 16avos). El % es sobre las
          simulaciones.
        </Note>
        <Footer>
          <Wave viewBox="0 0 1200 20" preserveAspectRatio="none" aria-hidden="true">
            <path
              d={`M0 10Q30 1 60 10${Array.from({ length: 19 }, (_, i) => `T${(i + 2) * 60} 10`).join("")}`}
              fill="none"
              stroke={colors.lime}
              strokeWidth="4"
            />
          </Wave>
          <FooterRow>
            <span>estadística × mercado · datos: FotMob · OddsPapi · football-data · Understat · TheSportsDB</span>
            <strong>PÁLPITO ™</strong>
          </FooterRow>
        </Footer>
      </Container>
      <DevBadge type="button" aria-label="Abrir herramientas de desarrollo">
        <svg viewBox="0 0 40 40" aria-hidden="true">
          <path d="M13.500 27V13.500L26 29.500M26.500 13v9" fill="none" stroke="#fff" strokeWidth="2" />
        </svg>
      </DevBadge>
    </Page>
  );
}
